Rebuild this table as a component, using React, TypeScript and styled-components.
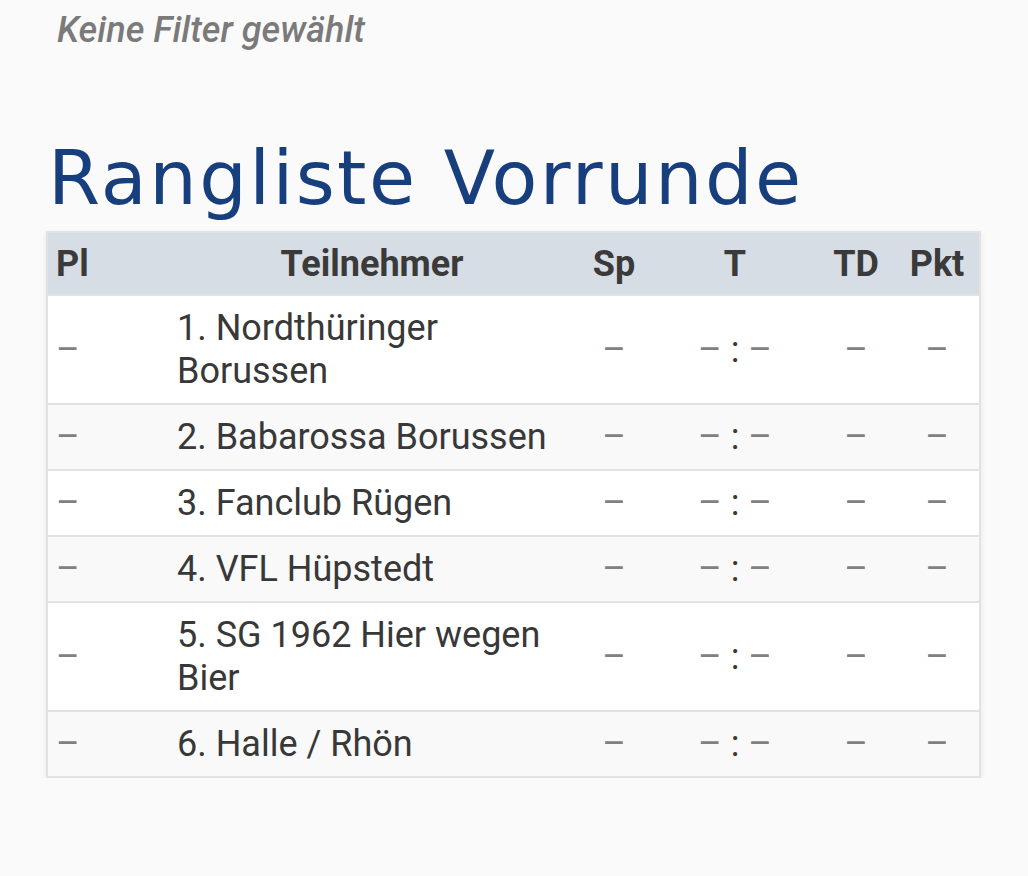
import React from 'react';
import styled, { createGlobalStyle } from 'styled-components';

const GlobalStyle = createGlobalStyle`
  body {
    margin: 0;
    background: #fafafa;
    font-family: Roboto, 'Liberation Sans', sans-serif;
  }
`;

const Page = styled.div`
  padding: 0 49px 0 46px;
`;

const FilterNote = styled.p`
  margin: 0;
  padding: 10px 0 0 11px;
  font-style: italic;
  font-weight: 500;
  font-size: 36px;
  line-height: 40px;
  color: #7a7a7a;
`;

const Heading = styled.h1`
  margin: 84px 0 0 0;
  padding-left: 2px;
  font-family: 'DejaVu Sans', sans-serif;
  font-weight: 400;
  font-size: 75px;
  line-height: 88px;
  letter-spacing: 2.4px;
  color: #173f7d;
`;

const Table = styled.table`
  width: 100%;
  margin-top: 9px;
  border-collapse: collapse;
  table-layout: fixed;
  border: 2px solid #e2e2e2;
  box-shadow: 0 2px 6px rgba(0, 0, 0, 0.08);
  font-size: 36px;
  color: #383838;
`;

const HeadCell = styled.th<{ $align?: 'left' | 'center' }>`
  background: #d7dde5;
  height: 61px;
  padding: 0 8px;
  font-weight: 700;
  text-align: ${(p) => p.$align ?? 'center'};
  color: #3a3a3a;
`;

const Row = styled.tr<{ $even: boolean }>`
  background: ${(p) => (p.$even ? '#f9f9f9' : '#ffffff')};
  border-top: 2px solid #e2e2e2;
`;

const Cell = styled.td<{ $align?: 'left' | 'center' }>`
  padding: 11px 8px 10px;
  line-height: 43px;
  text-align: ${(p) => p.$align ?? 'center'};
`;

const Dash = styled.span`
  color: #808080;
`;

const teams = [
  '1. Nordthüringer Borussen',
  '2. Babarossa Borussen',
  '3. Fanclub Rügen',
  '4. VFL Hüpstedt',
  '5. SG 1962 Hier wegen Bier',
  '6. Halle / Rhön',
];

const App = () => {
  return (
    <>
      <GlobalStyle />
      <Page>
        <FilterNote>Keine Filter gewählt</FilterNote>
        <Heading>Rangliste Vorrunde</Heading>
        <Table>
          <colgroup>
            <col style={{ width: 122 }} />
            <col style={{ width: 406 }} />
            <col style={{ width: 78 }} />
            <col style={{ width: 164 }} />
            <col style={{ width: 78 }} />
            <col style={{ width: 85 }} />
          </colgroup>
          <thead>
            <tr>
              <HeadCell $align="left">Pl</HeadCell>
              <HeadCell>Teilnehmer</HeadCell>
              <HeadCell>Sp</HeadCell>
              <HeadCell>T</HeadCell>
              <HeadCell>TD</HeadCell>
              <HeadCell>Pkt</HeadCell>
            </tr>
          </thead>
          <tbody>
            {teams.map((team, i) => (
              <Row key={team} $even={i % 2 === 1}>
                <Cell $align="left">
                  <Dash>–</Dash>
                </Cell>
                <Cell $align="left">{team}</Cell>
                <Cell>
                  <Dash>–</Dash>
                </Cell>
                <Cell>
                  <Dash>–</Dash> : <Dash>–</Dash>
                </Cell>
                <Cell>
                  <Dash>–</Dash>
                </Cell>
                <Cell>
                  <Dash>–</Dash>
                </Cell>
              </Row>
            ))}
          </tbody>
        </Table>
      </Page>
    </>
  );
};

export default App;
